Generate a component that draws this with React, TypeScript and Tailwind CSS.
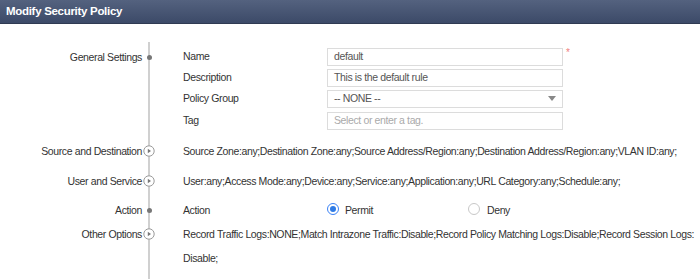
import React from "react";

const font = { fontFamily: '"Liberation Sans", Arial, sans-serif' };

function PlayIcon() {
  return (
    <svg width="12" height="12" viewBox="0 0 12 12">
      <circle cx="6" cy="6" r="5.2" fill="white" stroke="#9a9a9a" strokeWidth="1" />
      <path d="M4.8 3.8 L8 6 L4.8 8.2 Z" fill="#777" />
    </svg>
  );
}

function Dot() {
  return <div className="w-[5px] h-[5px] rounded-full bg-[#777]" />;
}

function Field({ label, children }: { label: string; children: React.ReactNode }) {
  return (
    <div className="flex items-center h-[21px]">
      <div className="w-[144px] shrink-0">{label}</div>
      {children}
    </div>
  );
}

const inputCls = "w-[236px] h-[18px] border border-[#dcdcdc] px-[6px] flex items-center shrink-0";

export default function App() {
  return (
    <div style={font} className="w-[700px] h-[279px] bg-white text-[10.5px] tracking-[-0.38px] text-[#333] overflow-hidden">
      <div className="h-[24px] bg-gradient-to-b from-[#54627f] to-[#3c4a68] border-b border-[#2f3a52] flex items-center pl-[6px]">
        <span className="text-white font-bold text-[11.5px] tracking-[-0.3px]">Modify Security Policy</span>
      </div>
      <div className="relative pt-[26px]">
        <div className="absolute left-[148px] top-[18px] bottom-[-10px] w-[2px] bg-[#d0d0d0]" />
        <div className="relative">
          <div className="flex">
            <div className="w-[143px] shrink-0 text-right pr-[1px] leading-[13px] pt-[1px]">General Settings</div>
            <div className="w-[12px] shrink-0 flex justify-center pt-[5px]"><Dot /></div>
            <div className="pl-[28px] flex-1 mt-[-4px]">
              <Field label="Name">
                <div className={`${inputCls} text-[#555]`}>default</div>
                <span className="text-[#f08080] ml-[3px] mt-[-8px] text-[10px]">*</span>
              </Field>
              <Field label="Description">
                <div className={`${inputCls} text-[#555]`}>This is the default rule</div>
              </Field>
              <Field label="Policy Group">
                <div className={`${inputCls} text-[#555] justify-between`}>
                  <span>-- NONE --</span>
                  <svg width="8" height="5" viewBox="0 0 8 5"><path d="M0 0 L8 0 L4 5 Z" fill="#888" /></svg>
                </div>
              </Field>
              <div className="flex items-center h-[21px] mt-[1px]">
                <div className="w-[144px] shrink-0">Tag</div>
                <div className={`${inputCls} text-[#aaa]`}>Select or enter a tag.</div>
              </div>
            </div>
          </div>
          <div className="mt-[13px] flex flex-col">
            <div className="h-[30px] flex">
              <div className="w-[143px] shrink-0 text-right pr-[1px]">Source and Destination</div>
              <div className="w-[12px] shrink-0 flex justify-center pt-[1px]"><PlayIcon /></div>
              <div className="pl-[28px] whitespace-nowrap">Source Zone:any;Destination Zone:any;Source Address/Region:any;Destination Address/Region:any;VLAN ID:any;</div>
            </div>
            <div className="h-[29px] flex">
              <div className="w-[143px] shrink-0 text-right pr-[1px]">User and Service</div>
              <div className="w-[12px] shrink-0 flex justify-center pt-[1px]"><PlayIcon /></div>
              <div className="pl-[28px] whitespace-nowrap">User:any;Access Mode:any;Device:any;Service:any;Application:any;URL Category:any;Schedule:any;</div>
            </div>
            <div className="h-[24px] flex">
              <div className="w-[143px] shrink-0 text-right pr-[1px]">Action</div>
              <div className="w-[12px] shrink-0 flex justify-center pt-[5px]"><Dot /></div>
              <div className="pl-[28px] flex">
                <div className="w-[144px] shrink-0">Action</div>
                <div className="flex items-start w-[141px] shrink-0">
                  <div className="w-[12px] h-[12px] rounded-full border border-[#3b82f6] flex items-center justify-center">
                    <div className="w-[6px] h-[6px] rounded-full bg-[#2f7be5]" />
                  </div>
                  <span className="ml-[6px]">Permit</span>
                </div>
                <div className="flex items-start">
                  <div className="w-[12px] h-[12px] rounded-full border border-[#c8c8c8]" />
                  <span className="ml-[7px]">Deny</span>
                </div>
              </div>
            </div>
            <div className="flex">
              <div className="w-[143px] shrink-0 text-right pr-[1px]">Other Options</div>
              <div className="w-[12px] shrink-0 flex justify-center pt-[1px]"><PlayIcon /></div>
              <div className="pl-[28px] flex-1 leading-[24px] mt-[-5px] pr-[4px]">Record Traffic Logs:NONE;Match Intrazone Traffic:Disable;Record Policy Matching Logs:Disable;Record Session Logs: Disable;</div>
            </div>
          </div>
        </div>
      </div>
    </div>
  );
}
